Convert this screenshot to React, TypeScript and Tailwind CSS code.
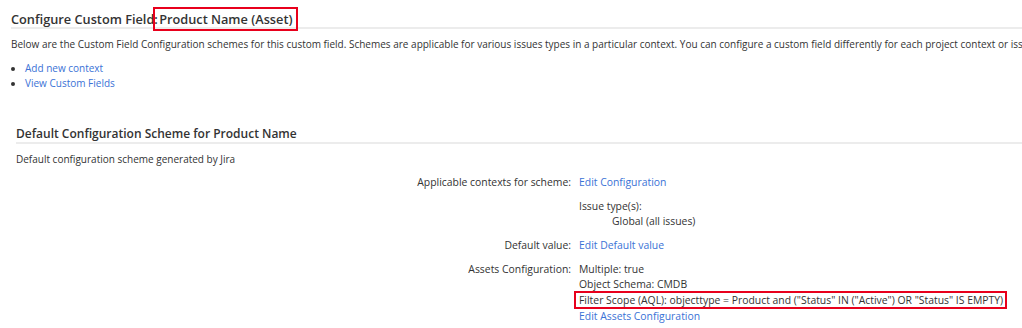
export default function App() {
  const font = { fontFamily: '"Segoe UI", "Open Sans", "Liberation Sans", sans-serif' };
  return (
    <div className="h-[328px] w-[1022px] overflow-hidden bg-white text-[10px] leading-[15px] text-[#333]" style={font}>
      <div className="pl-[11px] pt-[11px]">
        <h2 className="border-b-2 border-[#ececec] text-[12.75px] font-semibold leading-[16px] text-[#333]">
          Configure Custom Field:{" "}
          <span className="-my-[4px] -ml-[8px] inline-block border-2 border-[#e8001c] pt-[2px] pb-[2px] pl-[4px] pr-[3px] leading-[16px]">Product Name (Asset)</span>
        </h2>
        <p className="mt-[8px] whitespace-nowrap">
          Below are the Custom Field Configuration schemes for this custom field. Schemes are applicable for various issues types in a particular context. You can configure a custom field differently for each project context or issue type.
        </p>
        <ul className="mt-[9px] list-disc pl-[14px]">
          <li><a className="text-[#3a72d6]">Add new context</a></li>
          <li><a className="text-[#3a72d6]">View Custom Fields</a></li>
        </ul>
      </div>
      <div className="pl-[16px] pt-[35px]">
        <h3 className="border-b-2 border-[#ececec] text-[12px] font-semibold leading-[16px] text-[#333]">
          Default Configuration Scheme for Product Name
        </h3>
        <p className="mt-[8px]">Default configuration scheme generated by Jira</p>
        <div className="mt-[8px] grid grid-cols-[555px_1fr] gap-x-[8px] gap-y-[9px] text-[10.4px]">
          <div className="text-right">Applicable contexts for scheme:</div>
          <div>
            <a className="text-[#3a72d6]">Edit Configuration</a>
            <div className="mt-[9px]">Issue type(s):</div>
            <div className="pl-[33px]">Global (all issues)</div>
          </div>
          <div className="text-right">Default value:</div>
          <div><a className="text-[#3a72d6]">Edit Default value</a></div>
          <div className="text-right">Assets Configuration:</div>
          <div>
            <div>Multiple: true</div>
            <div>Object Schema: CMDB</div>
            <div className="-mt-[1px] -ml-[5px] w-fit whitespace-nowrap border-2 border-[#e8001c] pl-[3px] pr-[2px] leading-[14px]">
              Filter Scope (AQL): objecttype = Product and ("Status" IN ("Active") OR "Status" IS EMPTY)
            </div>
            <a className="text-[#3a72d6]">Edit Assets Configuration</a>
          </div>
        </div>
      </div>
    </div>
  );
}
